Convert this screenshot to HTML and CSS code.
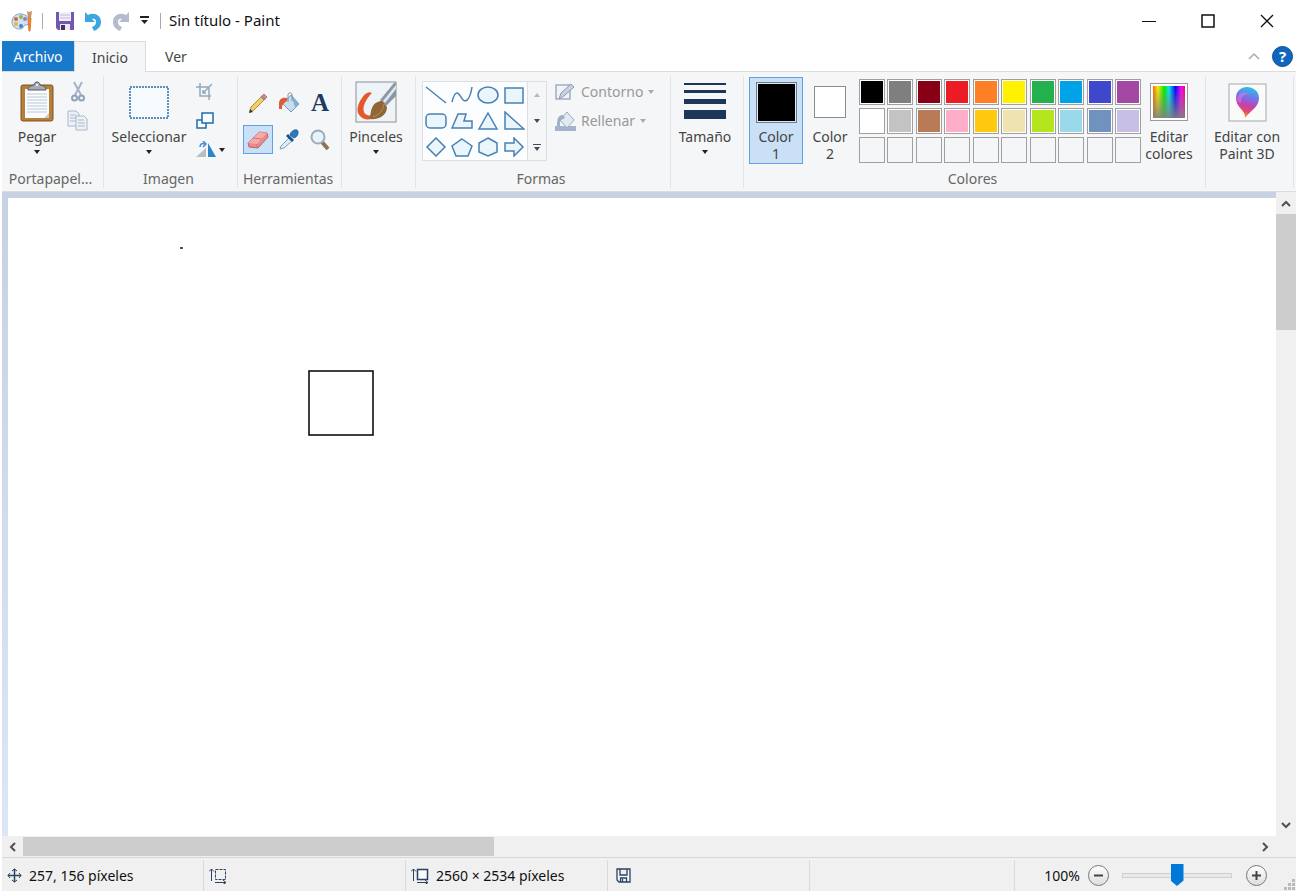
FILE: index.html
```
<!DOCTYPE html>
<html lang="es">
<head>
    <meta charset="UTF-8">
    <meta name="viewport" content="width=device-width, initial-scale=1.0">
    <title>Sin título - Paint</title>
    <link rel="stylesheet" href="styles.css">
</head>
<body>
    <header class="titlebar">
        <svg class="app-icon" width="22" height="22" viewBox="0 0 22 22">
            <path d="M11 4C5 3 1 7 1 12c0 4 3 7 8 7 4 0 3-3 5-4 3 0 4-1 4-4 0-4-3-6-7-7z" fill="#cfe3f1" stroke="#7fa3bf"/>
            <circle cx="5" cy="9" r="2" fill="#d9603b"/><circle cx="10" cy="7" r="2" fill="#8bbf4a"/>
            <circle cx="5" cy="14" r="2" fill="#e8b53c"/><circle cx="10" cy="16" r="2" fill="#3b86c9"/><circle cx="14" cy="9" r="2" fill="#a279c0"/>
            <path d="M17 8h3l-1 13h-1z" fill="#f08a2c" stroke="#e0792a"/><path d="M16 1l2 1 3-1-1 7h-3z" fill="#c99468"/>
        </svg>
        <span class="divider"></span>
        <div class="quick">
            <button aria-label="Guardar">
                <svg width="18" height="19" viewBox="0 0 18 19"><path d="M0 1h18v18H2l-2-2z" fill="#7457ae"/><path d="M3 1h12v9H3z" fill="#f1eef8"/><path d="M4 4h10M4 7h10" stroke="#c2b8dc"/><path d="M4 13h10v6H4z" fill="#e9e9ef"/><path d="M5 14h4v5H5z" fill="#3f3560"/></svg>
            </button>
            <button aria-label="Deshacer">
                <svg width="18" height="20" viewBox="0 0 18 20"><path d="M1 1v10h10L8 8c3-1 4 1 4 3 0 2-1 4-4 5l2 4c5-2 7-5 7-9 0-7-7-10-13-7z" fill="#3ea6df"/></svg>
            </button>
            <button aria-label="Rehacer">
                <svg width="18" height="20" viewBox="0 0 18 20"><path d="M17 1v10H7l3-3c-3-1-4 1-4 3 0 2 1 4 4 5l-2 4c-5-2-7-5-7-9 0-7 7-10 13-7z" fill="#b3bdcc"/></svg>
            </button>
            <button aria-label="Personalizar">
                <svg width="9" height="9" viewBox="0 0 9 9"><path d="M0 1h9" stroke="#222" stroke-width="2"/><path d="M1 4h7L4.500 8z" fill="#222"/></svg>
            </button>
        </div>
        <span class="divider"></span>
        <h1>Sin título - Paint</h1>
        <div class="window-buttons">
            <button aria-label="Minimizar"><svg width="14" height="14" viewBox="0 0 14 14"><path d="M0 7.500h14" stroke="#111"/></svg></button>
            <button aria-label="Maximizar"><svg width="14" height="14" viewBox="0 0 14 14"><rect x="1" y="1" width="12" height="12" fill="none" stroke="#111" stroke-width="1.500"/></svg></button>
            <button aria-label="Cerrar"><svg width="14" height="14" viewBox="0 0 14 14"><path d="M1 1l12 12M13 1L1 13" stroke="#111" stroke-width="1.300"/></svg></button>
        </div>
    </header>

    <nav class="tabs">
        <button class="tab file">Archivo</button>
        <button class="tab active">Inicio</button>
        <button class="tab">Ver</button>
        <button class="collapse" aria-label="Contraer la cinta"><svg width="12" height="8" viewBox="0 0 12 8"><path d="M1 7l5-5 5 5" fill="none" stroke="#aaa" stroke-width="1.500"/></svg></button>
        <button class="help" aria-label="Ayuda">?</button>
    </nav>

    <section class="ribbon">
        <div class="group clipboard">
            <div class="group-body">
                <button class="big">
                    <span class="pic"><svg width="34" height="42" viewBox="0 0 34 42"><rect x="1" y="4" width="32" height="36" rx="2" fill="#b77f36" stroke="#7c5420"/><path d="M5 8h24v29H5z" fill="#fbfcfe"/><path d="M7 13h20M7 16h20M7 19h20M7 22h20M7 25h20M7 28h20M7 31h20" stroke="#b9c9d8"/><path d="M24 37l5-5v5z" fill="#c9cdd3"/><path d="M8 9c0-4 3-4 6-5 0-4 6-4 6 0 3 1 6 1 6 5z" fill="#a9adb3" stroke="#55595f"/><circle cx="17" cy="4" r="1" fill="#fff"/></svg></span>
                    Pegar<i class="arrow"></i>
                </button>
                <div class="stack">
                    <button aria-label="Cortar"><svg width="14" height="21" viewBox="0 0 14 21"><path d="M3 1l7 13M11 1L4 14" stroke="#a5b4c6" stroke-width="2"/><circle cx="3.500" cy="17" r="2.500" fill="none" stroke="#8ea3ba" stroke-width="2"/><circle cx="10.500" cy="17" r="2.500" fill="none" stroke="#8ea3ba" stroke-width="2"/></svg></button>
                    <button aria-label="Copiar"><svg width="21" height="21" viewBox="0 0 21 21"><g fill="#edf2f8" stroke="#a8b7ca"><path d="M1 1h8l3 3v12H1z"/><path d="M9 6h8l3 3v11H9z"/></g><path d="M3 5h6M3 8h6M3 11h6M11 10h6M11 13h7M11 16h7" stroke="#a8b7ca"/></svg></button>
                </div>
            </div>
            <h2>Portapapel...</h2>
        </div>

        <div class="group image">
            <div class="group-body">
                <button class="big">
                    <span class="pic"><svg width="40" height="33" viewBox="0 0 40 33"><rect x="1" y="1" width="38" height="31" fill="#f5faff" stroke="#2e6ca8" stroke-width="1.500" stroke-dasharray="2 1"/></svg></span>
                    Seleccionar<i class="arrow"></i>
                </button>
                <div class="stack">
                    <button aria-label="Recortar"><svg width="17" height="17" viewBox="0 0 17 17"><path d="M4 0v13h11M0 4h13v13M7 10L16 1M7 7v3h3" fill="none" stroke="#94a8bf" stroke-width="1.500"/></svg></button>
                    <button aria-label="Cambiar de tamaño"><svg width="18" height="17" viewBox="0 0 18 17"><g fill="#f7fbff" stroke="#1f6cab" stroke-width="1.500"><path d="M1 8h9v8H1z"/><path d="M6 1h11v10H6z"/></g></svg></button>
                    <button class="rotate" aria-label="Girar"><svg width="21" height="17" viewBox="0 0 21 17"><path d="M10 7v9H0z" fill="#b9bcc0"/><path d="M12 2v14h8z" fill="#2a86c4"/><path d="M4 6c0-3 2-4 5-3M7 0l3 3-3 3" fill="none" stroke="#3f8fe0" stroke-width="1.500"/></svg><i class="arrow"></i></button>
                </div>
            </div>
            <h2>Imagen</h2>
        </div>

        <div class="group tools">
            <div class="group-body">
                <div class="tool-grid">
                    <button aria-label="Lápiz"><svg width="20" height="22" viewBox="0 0 20 22"><path d="M3 15L13 5l3 3L6 18l-4 2z" fill="#f2cf63" stroke="#b08f45"/><path d="M14 4l2-2 3 3-2 2z" fill="#d7889a" stroke="#b8707f"/><path d="M13 4l4 4" stroke="#8d9199" stroke-width="1.500"/><path d="M1 21l1-4 3 3z" fill="#333"/></svg></button>
                    <button aria-label="Relleno con color"><svg width="22" height="22" viewBox="0 0 22 22"><path d="M5 12L13 3l8 9-8 8z" fill="#c5dff0" stroke="#7899b4"/><path d="M13 3l8 9-4 3z" fill="#86aece"/><path d="M10 10V3c0-3 4-3 4 0v6" fill="none" stroke="#7c96ad"/><path d="M9 6C4 5 1 7 1 12v5h3c0-4 1-6 5-8z" fill="#e05a33"/></svg></button>
                    <button class="text-tool" aria-label="Texto">A</button>
                    <button class="selected" aria-label="Borrador"><svg width="22" height="20" viewBox="0 0 22 20"><path d="M1 13L12 2l8 1 1 4-10 11-9-1z" fill="#e98a8c" stroke="#bd6468"/><path d="M1 13L12 2l8 1-10 11z" fill="#f5aaaa"/><path d="M10 14v4M6 8l9 1" fill="none" stroke="#ce7577"/></svg></button>
                    <button aria-label="Selector de color"><svg width="20" height="21" viewBox="0 0 20 21"><path d="M2 17L11 8l3 3-9 8-4 1z" fill="#dcecf6" stroke="#7fa0b9"/><path d="M9 5l6 6-2 2-6-6z" fill="#174f87"/><path d="M11 6c1-5 8-7 8-3s-2 5-4 6z" fill="#2d79bd" stroke="#225f99"/></svg></button>
                    <button aria-label="Lupa"><svg width="20" height="22" viewBox="0 0 20 22"><path d="M12 13l6 7" stroke="#8b735d" stroke-width="4"/><circle cx="8" cy="8" r="6.500" fill="#e5f3fc" stroke="#a1abb5" stroke-width="2"/></svg></button>
                </div>
            </div>
            <h2>Herramientas</h2>
        </div>

        <div class="group brushes">
            <div class="group-body">
                <button class="big">
                    <span class="pic"><svg width="42" height="42" viewBox="0 0 42 42"><rect x="1" y="1" width="40" height="40" fill="#edf3f7" stroke="#8d9196"/><path d="M17 12c-3-2-7 0-10 5-5 7-6 14-2 18 4 5 12 4 16 0-7 0-11-1-12-4-2-5 2-12 6-17z" fill="#e5582b"/><path d="M25 19L39 2h2v13L31 25z" fill="#8b96a7"/><path d="M28 20L41 4v4L30 22z" fill="#e2e7ee"/><path d="M14 38c2-3 1-7 3-11 2-5 6-7 10-7l5 6c0 8-7 13-18 12z" fill="#916636"/><path d="M18 36c6-2 10-6 11-13" stroke="#b98d56" fill="none"/></svg></span>
                    Pinceles<i class="arrow"></i>
                </button>
            </div>
        </div>

        <div class="group shapes">
            <div class="group-body">
                <div class="gallery">
                    <button aria-label="Línea"><svg width="22" height="20" viewBox="0 0 22 20"><path d="M1 2l20 16"/></svg></button>
                    <button aria-label="Curva"><svg width="22" height="20" viewBox="0 0 22 20"><path d="M1 17C4 5 7 7 10 12c4 8 9 3 11-10" fill="none"/></svg></button>
                    <button aria-label="Óvalo"><svg width="22" height="20" viewBox="0 0 22 20"><ellipse cx="11" cy="10" rx="10" ry="8"/></svg></button>
                    <button aria-label="Rectángulo"><svg width="22" height="20" viewBox="0 0 22 20"><path d="M2 3h18v15H2z"/></svg></button>
                    <button aria-label="Rectángulo redondeado"><svg width="22" height="20" viewBox="0 0 22 20"><rect x="1" y="3" width="20" height="14" rx="4"/></svg></button>
                    <button aria-label="Polígono"><svg width="22" height="20" viewBox="0 0 22 20"><path d="M7 3h8l-2 7h8v7H1z"/></svg></button>
                    <button aria-label="Triángulo"><svg width="22" height="20" viewBox="0 0 22 20"><path d="M11 2l9 16H2z"/></svg></button>
                    <button aria-label="Triángulo rectángulo"><svg width="22" height="20" viewBox="0 0 22 20"><path d="M2 1l19 17H2z"/></svg></button>
                    <button aria-label="Rombo"><svg width="22" height="20" viewBox="0 0 22 20"><path d="M11 1l9 9-9 9-9-9z"/></svg></button>
                    <button aria-label="Pentágono"><svg width="22" height="20" viewBox="0 0 22 20"><path d="M11 2l10 7-4 10H5L1 9z"/></svg></button>
                    <button aria-label="Hexágono"><svg width="22" height="20" viewBox="0 0 22 20"><path d="M11 1l9 5v9l-9 4-9-4V6z"/></svg></button>
                    <button aria-label="Flecha derecha"><svg width="22" height="20" viewBox="0 0 22 20"><path d="M2 6h9V1l9 9-9 9v-5H2z"/></svg></button>
                </div>
                <div class="gallery-scroll">
                    <button aria-label="Subir"><i class="arrow up"></i></button>
                    <button aria-label="Bajar"><i class="arrow"></i></button>
                    <button class="more" aria-label="Más"><i class="arrow"></i></button>
                </div>
                <div class="shape-options">
                    <button disabled><svg width="21" height="20" viewBox="0 0 21 20"><path d="M1 3h14v14H1z" fill="#f0f3f8" stroke="#a2adbe" stroke-width="1.500"/><path d="M4 17l2-6L16 2l3 3L9 14z" fill="#c8d1df" stroke="#8e9cb1"/></svg>Contorno<i class="arrow"></i></button>
                    <button disabled><svg width="21" height="20" viewBox="0 0 21 20"><path d="M0 15h21v5H0z" fill="#a4b3cb"/><path d="M5 9l7-8 7 8-7 8z" fill="#e2e9f2" stroke="#9aaac0"/><path d="M8 4C3 4 2 8 2 15h3c0-5 0-6 5-8z" fill="#9eafc8"/></svg>Rellenar<i class="arrow"></i></button>
                </div>
            </div>
            <h2>Formas</h2>
        </div>

        <div class="group size">
            <div class="group-body">
                <button class="big">
                    <span class="pic"><svg width="42" height="38" viewBox="0 0 42 38"><path d="M0 0h42v2H0zM0 7h42v3H0zM0 16h42v5H0zM0 27h42v9H0z" fill="#1d3659"/></svg></span>
                    Tamaño<i class="arrow"></i>
                </button>
            </div>
        </div>

        <div class="group colors">
            <div class="group-body">
                <button class="big selected"><span class="pic"><span class="well primary"></span></span>Color<br>1</button>
                <button class="big"><span class="pic"><span class="well"></span></span>Color<br>2</button>
                <div class="palette">
                    <button class="swatch black" aria-label="Negro"></button>
                    <button class="swatch gray" aria-label="Gris"></button>
                    <button class="swatch dark-red" aria-label="Rojo oscuro"></button>
                    <button class="swatch red" aria-label="Rojo"></button>
                    <button class="swatch orange" aria-label="Naranja"></button>
                    <button class="swatch yellow" aria-label="Amarillo"></button>
                    <button class="swatch green" aria-label="Verde"></button>
                    <button class="swatch turquoise" aria-label="Turquesa"></button>
                    <button class="swatch indigo" aria-label="Añil"></button>
                    <button class="swatch purple" aria-label="Púrpura"></button>
                    <button class="swatch white" aria-label="Blanco"></button>
                    <button class="swatch light-gray" aria-label="Gris claro"></button>
                    <button class="swatch brown" aria-label="Marrón"></button>
                    <button class="swatch rose" aria-label="Rosa"></button>
                    <button class="swatch gold" aria-label="Oro"></button>
                    <button class="swatch cream" aria-label="Canela claro"></button>
                    <button class="swatch lime" aria-label="Lima"></button>
                    <button class="swatch pale-turquoise" aria-label="Turquesa claro"></button>
                    <button class="swatch blue-gray" aria-label="Gris azulado"></button>
                    <button class="swatch lavender" aria-label="Lavanda"></button>
                    <!-- custom colors -->
                    <button class="swatch empty" aria-label="Personalizado 1"></button>
                    <button class="swatch empty" aria-label="Personalizado 2"></button>
                    <button class="swatch empty" aria-label="Personalizado 3"></button>
                    <button class="swatch empty" aria-label="Personalizado 4"></button>
                    <button class="swatch empty" aria-label="Personalizado 5"></button>
                    <button class="swatch empty" aria-label="Personalizado 6"></button>
                    <button class="swatch empty" aria-label="Personalizado 7"></button>
                    <button class="swatch empty" aria-label="Personalizado 8"></button>
                    <button class="swatch empty" aria-label="Personalizado 9"></button>
                    <button class="swatch empty" aria-label="Personalizado 10"></button>
                </div>
                <button class="big"><span class="pic"><span class="spectrum"></span></span>Editar<br>colores</button>
            </div>
            <h2>Colores</h2>
        </div>

        <div class="group paint3d">
            <div class="group-body">
                <button class="big">
                    <span class="pic"><svg width="39" height="39" viewBox="0 0 39 39">
                        <defs><linearGradient id="drop" x1="0.600" y1="0" x2="0.400" y2="1"><stop offset="0" stop-color="#22c5e8"/><stop offset="0.350" stop-color="#7a6fe8"/><stop offset="0.600" stop-color="#c63fae"/><stop offset="0.800" stop-color="#ea4a5c"/><stop offset="1" stop-color="#f6b02c"/></linearGradient></defs>
                        <rect x="1" y="1" width="37" height="37" fill="#fafafa" stroke="#a8a8a8"/>
                        <path d="M17 35c0-5-2-7-5-10-3-4-4-7-4-10C8 8 13 4 19 4s12 4 12 11c0 9-8 12-14 20z" fill="url(#drop)"/>
                        <path d="M9 16c1-6 7-8 11-5-4 1-7 3-7 9-2 0-4-2-4-4z" fill="#e77bd8" opacity="0.500"/>
                    </svg></span>
                    Editar con<br>Paint 3D
                </button>
            </div>
        </div>
    </section>

    <main class="workspace">
        <div class="viewport">
            <svg class="canvas" role="img" aria-label="Lienzo">
                <rect x="301" y="173" width="64" height="64" fill="#fff" stroke="#000" stroke-width="1.500"/>
                <rect x="172" y="49" width="3" height="2" fill="#555"/>
            </svg>
        </div>
        <div class="scroll vertical">
            <button aria-label="Arriba"><svg width="10" height="7" viewBox="0 0 10 7"><path d="M1 6l4-4 4 4"/></svg></button>
            <span class="thumb"></span>
            <button aria-label="Abajo"><svg width="10" height="7" viewBox="0 0 10 7"><path d="M1 1l4 4 4-4"/></svg></button>
        </div>
        <div class="scroll horizontal">
            <button aria-label="Izquierda"><svg width="7" height="10" viewBox="0 0 7 10"><path d="M6 1L2 5l4 4"/></svg></button>
            <span class="thumb"></span>
            <button aria-label="Derecha"><svg width="7" height="10" viewBox="0 0 7 10"><path d="M1 1l4 4-4 4"/></svg></button>
        </div>
    </main>

    <footer class="status">
        <div class="cell">
            <svg width="15" height="15" viewBox="0 0 15 15"><path d="M7.500 1v13M1 7.500h13" stroke="#2b4260" stroke-width="1.500"/><path d="M5 3l2.500-2L10 3M5 12l2.500 2 2.500-2M3 5L1 7.500 3 10M12 5l2 2.500-2 2.500" fill="none" stroke="#2b4260"/></svg>
            257, 156 píxeles
        </div>
        <div class="cell">
            <svg width="18" height="16" viewBox="0 0 18 16"><path d="M2.500 13V1M0 3.500L2.500 1 5 3.500M6 14.500h11M14 12l3 2.500-3 2" fill="none" stroke="#2b4260"/><rect x="6.500" y="1.500" width="10" height="10" fill="none" stroke="#2b4260" stroke-dasharray="3 1"/></svg>
        </div>
        <div class="cell">
            <svg width="18" height="16" viewBox="0 0 18 16"><path d="M2.500 13V1M0 3.500L2.500 1 5 3.500M6 14.500h11M14 12l3 2.500-3 2" fill="none" stroke="#2b4260"/><rect x="6.500" y="1.500" width="10" height="10" fill="#f8fcff" stroke="#2b4260" stroke-width="1.500"/></svg>
            2560 × 2534 píxeles
        </div>
        <div class="cell saved">
            <svg width="15" height="15" viewBox="0 0 15 15"><path d="M1 1h13v13H3l-2-2zM4 1v6h7V1M4.500 14v-4h6v4M6.500 11v3" fill="#f4f8fb" stroke="#2b4260" stroke-width="1.300"/></svg>
        </div>
        <div class="cell wide"></div>
        <div class="zoom">
            <label for="zoom">100%</label>
            <button class="round" aria-label="Alejar"><svg width="11" height="11" viewBox="0 0 11 11"><path d="M1 5.500h9" stroke="#444" stroke-width="2"/></svg></button>
            <input type="range" id="zoom" min="0" max="100" value="50">
            <button class="round" aria-label="Acercar"><svg width="11" height="11" viewBox="0 0 11 11"><path d="M1 5.500h9M5.500 1v9" stroke="#444" stroke-width="2"/></svg></button>
            <svg class="grip" width="12" height="12" viewBox="0 0 12 12"><path d="M8 0h3v3H8zM4 4h3v3H4zM8 4h3v3H8zM0 8h3v3H0zM4 8h3v3H4zM8 8h3v3H8z" fill="#bbb"/></svg>
        </div>
    </footer>
</body>
</html>
```
FILE: styles.css
```
* {
    box-sizing: border-box;
}

body {
    margin: 0;
    padding: 0 2px 2px;
    height: 100vh;
    display: flex;
    flex-direction: column;
    background: #fff;
    color: #444;
    font-family: "Noto Sans", "Open Sans", sans-serif;
    font-size: 14px;
    line-height: 17px;
}

button {
    margin: 0;
    padding: 0;
    border: 0;
    background: none;
    color: inherit;
    font: inherit;
}

svg {
    display: block;
    flex: none;
}

/* Title bar */
.titlebar {
    display: flex;
    align-items: center;
    height: 41px;
    padding-left: 9px;
}

.titlebar h1 {
    margin: 0 0 0 8px;
    font-size: 15px;
    font-weight: 400;
    color: #111;
}

.divider {
    width: 1px;
    height: 16px;
    margin-left: 9px;
    background: #aaa;
}

.quick {
    display: flex;
    align-items: center;
    gap: 10px;
    margin: 0 2px 0 13px;
}

.window-buttons {
    display: flex;
    margin-left: auto;
}

.window-buttons button {
    display: flex;
    justify-content: center;
    width: 59px;
}

/* Tabs */
.tabs {
    display: flex;
    align-items: center;
    height: 30px;
    padding-right: 3px;
}

.tab {
    width: 60px;
    height: 30px;
}

.tab.file {
    width: 72px;
    background: #1979ca;
    color: #fff;
}

.tab.active {
    width: 72px;
    height: 31px;
    margin-bottom: -1px;
    border: 1px solid #dadbdc;
    border-bottom: 0;
    background: #f5f6f7;
    z-index: 1;
}

.collapse {
    margin-left: auto;
}

.help {
    width: 21px;
    height: 21px;
    margin-left: 12px;
    border: 1px solid #0a4e94;
    border-radius: 50%;
    background: #0f66bd;
    color: #fff;
    font-size: 15px;
    font-weight: 700;
}

/* Ribbon */
.ribbon {
    display: flex;
    height: 121px;
    padding: 4px 0 3px;
    border-top: 1px solid #dadbdc;
    border-bottom: 1px solid #dadbdc;
    background: #f5f6f7;
}

.group {
    display: flex;
    flex-direction: column;
    padding: 1px 5px 0;
    border-right: 1px solid #e2e3e4;
}

.group-body {
    display: flex;
    flex: 1;
    align-items: flex-start;
}

.group h2 {
    margin: 0;
    padding-right: 4px;
    font-size: 14px;
    font-weight: 400;
    line-height: 18px;
    text-align: center;
    white-space: nowrap;
    color: #666;
}

.clipboard { width: 102px; }
.image { width: 134px; }
.tools { width: 104px; }
.brushes { width: 74px; }
.shapes { width: 255px; }
.size { width: 73px; }
.colors { width: 462px; }
.paint3d { width: 88px; }

.big {
    display: flex;
    flex-direction: column;
    align-items: center;
    height: 87px;
    padding: 3px 0 0;
    border: 1px solid transparent;
    white-space: nowrap;
}

.clipboard .big { width: 60px; }
.image .big { width: 80px; }
.brushes .big,
.size .big { width: 58px; }
.colors .big { width: 54px; }
.paint3d .big { width: 72px; }

.pic {
    display: flex;
    align-items: center;
    justify-content: center;
    height: 42px;
    margin-bottom: 5px;
}

.selected {
    border: 1px solid #62a2e4;
    background: #c9e0f7;
}

.arrow {
    border: 3px solid transparent;
    border-top: 4px solid #222;
    border-bottom: 0;
}

.big .arrow {
    margin-top: 5px;
}

.stack {
    display: flex;
    flex-direction: column;
    align-items: center;
}

.image .stack {
    align-items: flex-start;
    margin-left: 7px;
}

.stack button {
    display: flex;
    align-items: center;
    justify-content: center;
    gap: 2px;
    height: 29px;
}

.tool-grid {
    display: grid;
    grid-template-columns: repeat(3, 30px);
    gap: 8px 1px;
    padding-top: 11px;
}

.tool-grid button {
    display: flex;
    align-items: center;
    justify-content: center;
    height: 29px;
}

.text-tool {
    color: #1d3a63;
    font-family: "Liberation Serif", serif;
    font-size: 25px;
    font-weight: 700;
}

.gallery {
    display: grid;
    grid-template-columns: repeat(4, 26px);
    grid-template-rows: repeat(3, 26px);
    margin: 4px 0 0 1px;
    border: 1px solid #dcdfe3;
    background: #fbfdff;
}

.gallery button {
    display: flex;
    align-items: center;
    justify-content: center;
}

.gallery svg {
    fill: #eaf5fc;
    stroke: #4a80b2;
    stroke-width: 1.5px;
}

.gallery-scroll {
    display: grid;
    grid-template-rows: repeat(3, 26px);
    width: 19px;
    margin-top: 4px;
    border: 1px solid #dcdfe3;
    border-left: 0;
}

.gallery-scroll button {
    display: flex;
    flex-direction: column;
    align-items: center;
    justify-content: center;
    gap: 2px;
}

.gallery-scroll .arrow {
    border-top-color: #444c5c;
}

.gallery-scroll .up {
    border-top-color: #b5b8bd;
    transform: rotate(180deg);
}

.more::before {
    content: '';
    width: 8px;
    height: 1px;
    background: #444c5c;
}

.shape-options {
    margin-left: 8px;
}

.shape-options button {
    display: flex;
    align-items: center;
    gap: 5px;
    height: 29px;
    color: #999;
}

.shape-options .arrow {
    border-top-color: #aaa;
}

/* Colors */
.well {
    width: 32px;
    height: 32px;
    border: 1px solid #8c8c8c;
    background: #fff;
}

.well.primary {
    width: 41px;
    height: 41px;
    border-color: #6d7c8c;
    background: #000;
    box-shadow: inset 0 0 0 1px #dfe9f3;
}

.palette {
    display: grid;
    grid-template-columns: repeat(10, 26px);
    justify-content: space-between;
    gap: 3px 0;
    width: 282px;
    margin: 2px 1px 0 2px;
}

.swatch {
    height: 26px;
    border: 1px solid #a0a0a0;
    box-shadow: inset 0 0 0 1px #fff;
}

.empty { box-shadow: none; }
.black { background: #000; }
.gray { background: #7f7f7f; }
.dark-red { background: #880015; }
.red { background: #ed1c24; }
.orange { background: #ff7f27; }
.yellow { background: #fff200; }
.green { background: #22b14c; }
.turquoise { background: #00a2e8; }
.indigo { background: #3f48cc; }
.purple { background: #a349a4; }
.white { background: #fff; }
.light-gray { background: #c3c3c3; }
.brown { background: #b97a57; }
.rose { background: #ffaec9; }
.gold { background: #ffc90e; }
.cream { background: #efe4b0; }
.lime { background: #b5e61d; }
.pale-turquoise { background: #99d9ea; }
.blue-gray { background: #7092be; }
.lavender { background: #c8bfe7; }

.spectrum {
    width: 38px;
    height: 38px;
    border: 1px solid #999;
    padding: 2px;
    background:
        linear-gradient(to bottom, rgba(128, 128, 128, 0), rgba(128, 128, 128, 0.9)) content-box,
        linear-gradient(to right, #f60, #fe0 15%, #0e0 35%, #0ee 50%, #00f 70%, #f0f 88%, #f06) content-box,
        #fff;
}

/* Drawing area */
.workspace {
    display: grid;
    flex: 1;
    grid-template-columns: 1fr 20px;
    grid-template-rows: 1fr 21px;
    min-height: 0;
    background: #f0f0f0;
}

.viewport {
    min-height: 0;
    padding-left: 6px;
    border-top: 6px solid #c8d1e1;
    background: linear-gradient(#c8d1e1, #dce6f4);
}

.canvas {
    width: 100%;
    height: 100%;
    background: #fff;
}

.scroll {
    display: flex;
}

.scroll.vertical {
    flex-direction: column;
}

.scroll button {
    display: flex;
    align-items: center;
    justify-content: center;
    flex: 0 0 21px;
}

.scroll.vertical button {
    flex-basis: 22px;
}

.scroll path {
    fill: none;
    stroke: #505050;
    stroke-width: 2px;
}

.scroll .thumb {
    background: #cdcdcd;
}

.vertical .thumb {
    height: 18%;
    margin-bottom: auto;
}

.horizontal .thumb {
    width: 37%;
    margin: 1px auto 1px 0;
}

/* Status bar */
.status {
    display: flex;
    height: 34px;
    padding-top: 2px;
    border-top: 1px solid #d7d7d7;
    background: #f0f0f0;
    color: #111;
}

.cell {
    display: flex;
    align-items: center;
    gap: 7px;
    width: 202px;
    padding-left: 5px;
    border-right: 1px solid #dadada;
    white-space: nowrap;
}

.cell.saved {
    padding-left: 8px;
}

.cell.wide {
    width: 205px;
}

.zoom {
    display: flex;
    align-items: center;
    margin-left: auto;
}

.round {
    display: flex;
    align-items: center;
    justify-content: center;
    width: 21px;
    height: 21px;
    margin-left: 8px;
    border: 1px solid #777;
    border-radius: 50%;
    background: linear-gradient(#fff, #ddd);
}

.zoom input {
    width: 110px;
    height: 22px;
    margin: 0 6px 0 13px;
    background: none;
    appearance: none;
}

.zoom input::-webkit-slider-runnable-track {
    height: 5px;
    border: 1px solid #d0d0d0;
    background: #e7eaea;
}

.zoom input::-webkit-slider-thumb {
    width: 13px;
    height: 22px;
    margin-top: -10px;
    background: #0078d7;
    clip-path: polygon(0 0, 100% 0, 100% 75%, 50% 100%, 0 75%);
    appearance: none;
}

.grip {
    align-self: flex-end;
    margin-left: 17px;
}
```
